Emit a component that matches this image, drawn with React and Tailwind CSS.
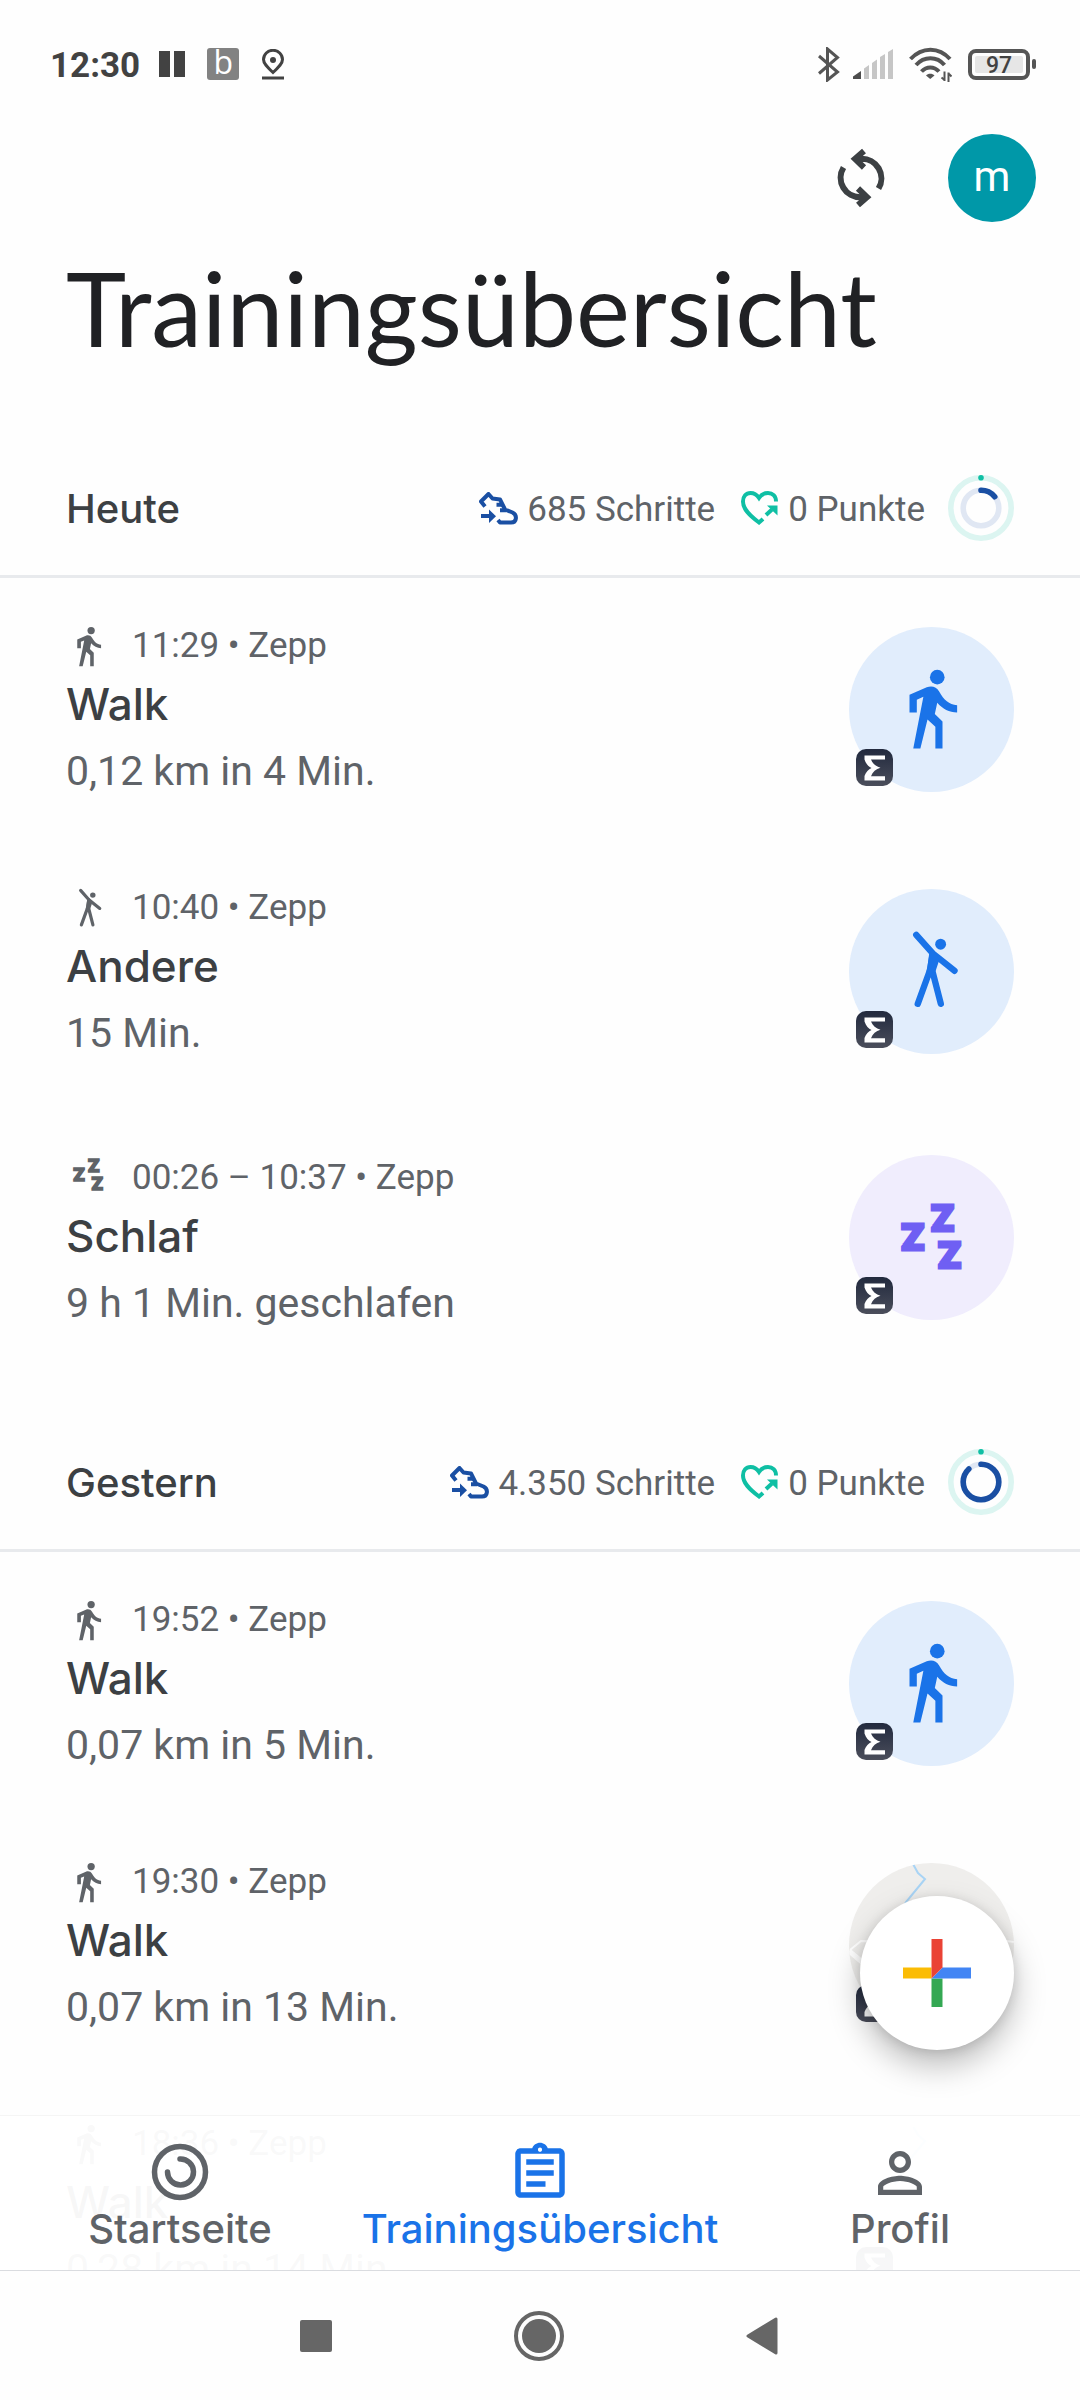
import React from 'react';
import { MdOutlineAssignment, MdPersonOutline } from 'react-icons/md';

const days = [
  {
    title: 'Heute',
    steps: '685 Schritte',
    points: '0 Punkte',
    progress: 0.14,
    entries: [
      { time: '11:29 • Zepp', title: 'Walk', detail: '0,12 km in 4 Min.', type: 'walk' },
      { time: '10:40 • Zepp', title: 'Andere', detail: '15 Min.', type: 'other' },
      { time: '00:26 – 10:37 • Zepp', title: 'Schlaf', detail: '9 h 1 Min. geschlafen', type: 'sleep' },
    ],
  },
  {
    title: 'Gestern',
    steps: '4.350 Schritte',
    points: '0 Punkte',
    progress: 0.88,
    entries: [
      { time: '19:52 • Zepp', title: 'Walk', detail: '0,07 km in 5 Min.', type: 'walk' },
      { time: '19:30 • Zepp', title: 'Walk', detail: '0,07 km in 13 Min.', type: 'walk', map: true },
      { time: '18:36 • Zepp', title: 'Walk', detail: '0,28 km in 14 Min.', type: 'walk', map: true },
    ],
  },
];

const WalkIcon = ({ className }) => (
  <svg viewBox="0 0 24 24" fill="currentColor" className={className} aria-hidden="true">
    <circle cx="13.4" cy="3.5" r="1.95" />
    <path d="M6 8.2 10.6 6.2C12 5.7 13.2 6.1 13.9 7.3C15.2 9.6 16.5 10.7 18.7 11V12.9C16.6 12.9 14.8 11.9 13.4 10.3L12.75 13.3 14.8 15.3V22.5H12.9V16.7L10.8 14.8 8.9 22.5H7L9.7 8.75 7.95 9.5V12.9H6Z" />
  </svg>
);

const OtherIcon = ({ className }) => (
  <svg
    viewBox="0 0 24 24"
    fill="none"
    stroke="currentColor"
    strokeWidth="1.7"
    strokeLinecap="round"
    strokeLinejoin="round"
    className={className}
    aria-hidden="true"
  >
    <circle cx="14.3" cy="4.85" r="1.45" fill="currentColor" stroke="none" />
    <path d="M7.8 2.35 12.2 7.3 18 11.95M12.1 7.4 11.6 11.4 8.2 20.75M11.9 11.2 14.35 20.75" />
    <path d="M12.2 7.4 11.4 12 12.2 11.6 13 9.2Z" fill="currentColor" />
  </svg>
);

const SleepIcon = ({ className }) => (
  <svg viewBox="0 0 24 24" fill="currentColor" className={className} aria-hidden="true">
    <g fontFamily="Roboto, sans-serif" fontWeight="900" fontSize="10" stroke="currentColor" strokeWidth="0.8">
      <text x="3.8" y="15.4">Z</text>
      <text x="11.7" y="10.5">Z</text>
      <text x="13.6" y="20.3">Z</text>
    </g>
  </svg>
);

const StepsIcon = () => (
  <svg
    viewBox="0 0 39 33"
    fill="none"
    stroke="currentColor"
    strokeWidth="4"
    strokeLinejoin="round"
    className="h-[33px] w-[39px] text-[#1a4fa3]"
    aria-hidden="true"
  >
    <path d="M6 14.5 2 9.5 9.5 2 13.5 6.5 21 7.5 26 17.5 33.5 20.5C38.5 23 38 30.5 32 30.5H21L19 28" />
    <path d="M17.5 12.7H24M21 18.2H27M2 24H10" />
    <path d="M10 17.5V31L17 24.2Z" fill="currentColor" stroke="none" />
  </svg>
);

const HeartIcon = () => (
  <svg
    viewBox="0 0 38 34"
    fill="none"
    stroke="currentColor"
    strokeWidth="4"
    className="h-[34px] w-[38px] text-[#0fbfa4]"
    aria-hidden="true"
  >
    <path d="M35 10.5C35 5 31.5 2 27 2C23 2 20 4 18 7C16 4 13 2 9.5 2C5 2 2 5.5 2 10.5C2 18 8 24 18 31.5L22 28" />
    <path d="M25 24 31 18.5" />
    <path d="M26 14.5H36.5V24.5Z" fill="currentColor" stroke="none" />
  </svg>
);

const Ring = ({ progress }) => (
  <svg viewBox="0 0 66 66" fill="none" className="h-[66px] w-[66px]" aria-hidden="true">
    <circle cx="33" cy="33" r="30.2" stroke="#dcf5f1" strokeWidth="5.6" />
    <circle cx="33" cy="2.8" r="2.8" fill="#0fbfa4" />
    <circle cx="33" cy="33" r="17.8" stroke="#e0e7f3" strokeWidth="5.6" />
    <circle
      cx="33"
      cy="33"
      r="17.8"
      stroke="#1a4fa3"
      strokeWidth="5.6"
      strokeLinecap="round"
      pathLength="100"
      strokeDasharray={`${progress * 100} 100`}
      transform="rotate(-90 33 33)"
    />
  </svg>
);

const SourceBadge = () => (
  <span className="absolute bottom-[6px] left-[7px] h-[37px] w-[37px] rounded-[10px] bg-linear-to-b from-[#222a3e] to-[#4b4e5b]">
    <svg viewBox="0 0 37 37" fill="white" className="h-full w-full" aria-hidden="true">
      <path d="M8.5 6.5H29V10.5H15C16.5 14.5 20 17.5 24.5 18.8C20 20 16.5 23 15 27.3H29V31.5H8.5V27C10 23 12.5 20.5 15.5 19C12.5 17.5 10 15 8.5 10.5Z" />
    </svg>
  </span>
);

const MapPreview = () => (
  <svg viewBox="0 0 165 165" fill="none" className="h-full w-full rounded-full bg-[#efeeec]" aria-hidden="true">
    <path d="M64 1 69 10 76 16 57 39 46 60" stroke="#a9d4f5" strokeWidth="2" />
    <path d="M0 88 13 99 60 140" stroke="white" strokeWidth="5" />
    <path d="M1 87 12 78 60 79 110 72 165 79" stroke="white" strokeWidth="2" />
  </svg>
);

const typeIcons = {
  walk: WalkIcon,
  other: OtherIcon,
  sleep: SleepIcon,
};

const Thumbnail = ({ entry }) => {
  const Icon = typeIcons[entry.type];
  const tone = entry.type === 'sleep' ? 'bg-[#f0edfd] text-[#6f5ff3]' : 'bg-[#e1edfc] text-[#1a73e8]';

  return (
    <div className="relative h-[165px] w-[165px] shrink-0">
      {entry.map ? (
        <MapPreview />
      ) : (
        <div className={`flex h-full w-full items-center justify-center rounded-full ${tone}`}>
          <Icon className="h-[90px] w-[90px]" />
        </div>
      )}
      <SourceBadge />
    </div>
  );
};

const Entry = ({ entry }) => {
  const Icon = typeIcons[entry.type];
  const metaHeight = entry.type === 'sleep' ? 'h-14' : 'h-12';

  return (
    <li className="flex items-center justify-between px-[66px] py-9">
      <div className="pt-2">
        <div className={`flex items-center gap-[21px] text-[#5f6368] ${metaHeight}`}>
          <Icon className="h-[45px] w-[45px]" />
          <p className="self-end text-[35px] leading-[48px]">{entry.time}</p>
        </div>
        <h3 className="font-['Inter',sans-serif] text-[44px] leading-[68px] font-medium text-[#3c4043]">
          {entry.title}
        </h3>
        <p className="text-[41px] leading-[66px] text-[#5f6368]">{entry.detail}</p>
      </div>
      <Thumbnail entry={entry} />
    </li>
  );
};

const Day = ({ day }) => (
  <section>
    <div className="flex items-center justify-between border-b-[3px] border-[#e8eaed] px-[66px] pt-[76px] pb-[33px]">
      <h2 className="pt-[2px] font-['Inter',sans-serif] text-[40px] leading-[66px] font-medium text-[#3c4043]">
        {day.title}
      </h2>
      <div className="flex h-[68px] items-center text-[35px] leading-[48px] text-[#5f6368]">
        <StepsIcon />
        <span className="ml-[9px] pt-1">{day.steps}</span>
        <span className="ml-[26px]">
          <HeartIcon />
        </span>
        <span className="mr-[23px] ml-[9px] pt-1">{day.points}</span>
        <Ring progress={day.progress} />
      </div>
    </div>
    <ul>
      {day.entries.map((entry) => (
        <Entry key={entry.time} entry={entry} />
      ))}
    </ul>
  </section>
);

const StatusBar = () => (
  <div className="flex h-32 shrink-0 items-center justify-between pr-[44px] pl-[50px] text-[#424242]">
    <div className="flex items-center">
      <span className="pt-[3px] text-[35px] leading-[48px] font-bold">12:30</span>
      <div className="ml-[19px] flex gap-1">
        <span className="h-[26px] w-[11px] bg-[#424242]" />
        <span className="h-[26px] w-[11px] bg-[#424242]" />
      </div>
      <span className="ml-[22px] flex h-8 w-8 items-center justify-center rounded-[3px] bg-[#828282] pb-1 font-['Open_Sans',sans-serif] text-[32px] leading-8 text-white">
        b
      </span>
      <svg viewBox="0 0 22 31" fill="none" stroke="currentColor" strokeWidth="3" className="ml-[23px] h-[31px] w-[22px]" aria-hidden="true">
        <path d="M11 23.5C5 18 1.5 14.5 1.5 10.5A9.5 9.2 0 0 1 20.5 10.5C20.5 14.5 17 18 11 23.5Z" />
        <circle cx="11" cy="11" r="3" fill="currentColor" stroke="none" />
        <path d="M0 29H22" />
      </svg>
    </div>

    <div className="flex items-center">
      <svg viewBox="0 0 22 35" fill="none" stroke="#555" strokeWidth="3" className="h-[35px] w-[22px]" aria-hidden="true">
        <path d="M1 9 19.5 25 9.5 33V2L19.5 10.5 1 26.5" />
      </svg>
      <svg viewBox="0 0 40 30" fill="#c6c6c6" className="ml-[13px] h-[30px] w-[40px]" aria-hidden="true">
        <path d="M0 30V27.5L8 22V30Z" fill="#4d4d4d" />
        <path d="M11 19.5 16 16V30H11ZM19 14 24 10.5V30H19ZM27 8 32 5V30H27ZM35 3 40 0V30H35Z" />
      </svg>
      <svg viewBox="0 0 43 35" fill="none" stroke="#555" strokeWidth="4" className="ml-4 h-[35px] w-[43px]" aria-hidden="true">
        <path d="M1.5 12C13 -.5 30 -.5 41 12M7 18C15 9 28 9 35.5 18M12.5 24.5C17.5 19 25 19 30 24.5" />
        <path d="M17 28.5C19 26 23.5 26 25.5 28.5L21.2 32Z" fill="#555" stroke="none" />
        <path d="M35.5 24.5V34M32.5 30.5 35.5 33M39.5 35V25.5M39.5 26.5 42.5 29.5" strokeWidth="2" />
      </svg>
      <div className="ml-4 flex h-[31px] w-[62px] rounded-lg border-4 border-[#555] p-[3px]">
        <span className="flex flex-1 items-center justify-center rounded-[2px] bg-[#e6e6e6] pt-[3px] text-[23px] leading-4 font-medium text-[#424242]">
          97
        </span>
      </div>
      <span className="ml-[2px] h-[10px] w-1 rounded-full bg-[#555]" />
    </div>
  </div>
);

const TopBar = () => (
  <header>
    <div className="flex h-[100px] items-center justify-end pr-[44px]">
      <button type="button" aria-label="Synchronisieren" className="text-[#3c4043]">
        <svg viewBox="0 0 60 60" fill="none" stroke="currentColor" strokeWidth="6" className="h-[60px] w-[60px]" aria-hidden="true">
          <path d="M24 10.8H30A19.5 19.5 0 0 1 47.5 40.5M33 3 24 10.8 33 19.5" />
          <path d="M36 49.2H30A19.5 19.5 0 0 1 12.5 19.5M27 57 36 49.2 27 40.5" />
        </svg>
      </button>
      <button
        type="button"
        aria-label="Konto"
        className="ml-[57px] flex h-[88px] w-[88px] items-center justify-center rounded-full bg-[#0098a8] pb-1 text-[42px] text-white"
      >
        m
      </button>
    </div>
    <h1 className="mt-5 px-[66px] pb-[30px] font-['Lato',sans-serif] text-[102px] leading-[120px] text-[#202124]">
      Trainingsübersicht
    </h1>
  </header>
);

const AddButton = () => (
  <button
    type="button"
    aria-label="Hinzufügen"
    className="absolute right-[66px] bottom-[221px] flex h-[154px] w-[154px] items-center justify-center rounded-full bg-white shadow-[0_16px_32px_rgba(0,0,0,0.26),0_2px_12px_rgba(0,0,0,0.12)]"
  >
    <svg viewBox="0 0 68 68" className="h-[68px] w-[68px]" aria-hidden="true">
      <path d="M0 28.5H28.5V39.5H0Z" fill="#fbbc04" />
      <path d="M28.5 39.5H39.5V68H28.5Z" fill="#34a853" />
      <path d="M39.5 28.5H68V39.5H28.5Z" fill="#4285f4" />
      <path d="M28.5 0H39.5V28.5L28.5 39.5Z" fill="#ea4335" />
    </svg>
  </button>
);

const HomeIcon = () => (
  <svg viewBox="0 0 66 66" fill="none" stroke="currentColor" strokeWidth="5.5" className="h-[66px] w-[66px]" aria-hidden="true">
    <circle cx="33" cy="32" r="25.5" />
    <path d="M33 19A13 13 0 1 1 20.5 32" strokeLinecap="round" />
  </svg>
);

const BottomNav = () => (
  <nav className="absolute inset-x-0 bottom-0 grid grid-cols-3 border-t border-b border-t-[#f5f5f5] border-b-[#dadce0] bg-white/96 pt-6 pb-[18px] font-['Inter',sans-serif] text-[40px] leading-[46px] font-medium text-[#5f6368]">
    <a href="#startseite" className="flex flex-col items-center">
      <HomeIcon />
      Startseite
    </a>
    <a href="#training" aria-current="page" className="flex flex-col items-center text-[#1a73e8]">
      <MdOutlineAssignment className="h-[66px] w-[66px]" />
      Trainingsübersicht
    </a>
    <a href="#profil" className="flex flex-col items-center">
      <MdPersonOutline className="h-[66px] w-[66px]" />
      Profil
    </a>
  </nav>
);

const SystemNav = () => (
  <div className="flex h-[129px] shrink-0 items-center justify-center gap-[182px] pr-[3px]">
    <button type="button" aria-label="Letzte Apps" className="h-8 w-8 rounded-[2px] bg-[#666]" />
    <button type="button" aria-label="Home" className="h-[50px] w-[50px] rounded-full border-4 border-[#666] p-1">
      <span className="block h-full w-full rounded-full bg-[#666]" />
    </button>
    <button type="button" aria-label="Zurück">
      <svg viewBox="0 0 32 38" className="h-[38px] w-8" aria-hidden="true">
        <path d="M30 2V36L2 19Z" fill="#666" stroke="#666" strokeWidth="3" strokeLinejoin="round" />
      </svg>
    </button>
  </div>
);

const App = () => {
  return (
    <div className="flex h-screen flex-col bg-[#fefefe] font-['Roboto',sans-serif]">
      <StatusBar />
      <div className="relative min-h-0 flex-1">
        <main className="h-full overflow-hidden">
          <TopBar />
          {days.map((day) => (
            <Day key={day.title} day={day} />
          ))}
        </main>
        <AddButton />
        <BottomNav />
      </div>
      <SystemNav />
    </div>
  );
};

export default App;
